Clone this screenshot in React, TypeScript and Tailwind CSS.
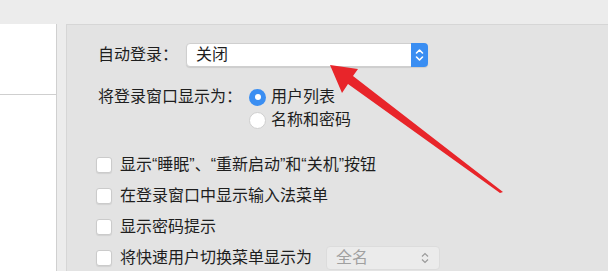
const checks = ['显示“睡眠”、“重新启动”和“关机”按钮', '在登录窗口中显示输入法菜单', '显示密码提示']

function Box() {
  return <span className="w-[16px] h-[16px] shrink-0 rounded-[3px] bg-white border border-[#cbcbcb] shadow-[0_1px_1px_rgba(0,0,0,0.08)]" />
}

export default function App() {
  return (
    <div className="relative w-[608px] h-[271px] overflow-hidden bg-[#ececec] text-[#1e1e1e]" style={{ fontFamily: '"Liberation Sans", "Noto Sans CJK SC", sans-serif' }}>
      <div className="h-[24px]" />
      <div className="flex h-[247px]">
        <div className="w-[57px] bg-white border-r border-[#d0d0d0] flex flex-col">
          <div className="h-[71px] border-b border-[#cfcfcf]" />
        </div>
        <div className="w-[9px] bg-[#ececec]" />
        <div className="flex-1 bg-[#e3e3e3] border-l border-t border-[#d6d6d6] pl-[31px] pt-[17px]">
          <div className="flex items-center h-[26px]">
            <span className="text-[16px] w-[88px]">自动登录：</span>
            <div className="w-[242px] h-[24px] bg-white rounded-[4px] border border-[#cfcfcf] shadow-[0_1px_1px_rgba(0,0,0,0.1)] flex items-center justify-between pl-[9px]">
              <span className="text-[16px] leading-none">关闭</span>
              <div className="w-[17px] h-[24px] rounded-r-[4px] bg-[#3a8ef2] flex items-center justify-center -mr-px">
                <svg width="9" height="14" viewBox="0 0 9 14" fill="none" stroke="white" strokeWidth="1.6" strokeLinecap="round" strokeLinejoin="round"><path d="M1.5 5 4.5 2 7.5 5M1.5 9 4.5 12 7.5 9" /></svg>
              </div>
            </div>
          </div>
          <div className="flex mt-[20px]">
            <span className="text-[16px] w-[151px] leading-[18px]">将登录窗口显示为：</span>
            <div className="flex flex-col gap-[5px]">
              <div className="flex items-center gap-[5px] h-[18px]">
                <span className="w-[17px] h-[17px] rounded-full bg-[#3a8ef2] flex items-center justify-center"><span className="w-[6px] h-[6px] rounded-full bg-white" /></span>
                <span className="text-[16px]">用户列表</span>
              </div>
              <div className="flex items-center gap-[5px] h-[18px]">
                <span className="w-[17px] h-[17px] rounded-full bg-white border border-[#cfcfcf]" />
                <span className="text-[16px]">名称和密码</span>
              </div>
            </div>
          </div>
          <div className="flex flex-col gap-[10px] mt-[25px] -ml-[2px]">
            {checks.map(c => (
              <div key={c} className="flex items-center gap-[8px] h-[21px]">
                <Box />
                <span className="text-[16px]">{c}</span>
              </div>
            ))}
            <div className="flex items-center h-[21px]">
              <div className="flex items-center gap-[8px] w-[230px]">
                <Box />
                <span className="text-[16px]">将快速用户切换菜单显示为</span>
              </div>
              <div className="w-[114px] h-[24px] bg-[#ebebeb] rounded-[4px] border border-[#dcdcdc] flex items-center justify-between pl-[9px] pr-[10px]">
                <span className="text-[16px] text-[#a0a0a0]">全名</span>
                <svg width="8" height="12" viewBox="0 0 8 12" fill="none" stroke="#9a9a9a" strokeWidth="1.2"><path d="M1 4.5 4 1.5 7 4.5M1 7.5 4 10.5 7 7.5" /></svg>
              </div>
            </div>
          </div>
        </div>
      </div>
      <svg className="absolute left-0 top-0" width="608" height="271" viewBox="0 0 608 271">
        <path d="M330 65 L358 69 L353 76 L503 192 L500 193 L348 84 L342 93 Z" fill="#e8252a" />
      </svg>
    </div>
  )
}
